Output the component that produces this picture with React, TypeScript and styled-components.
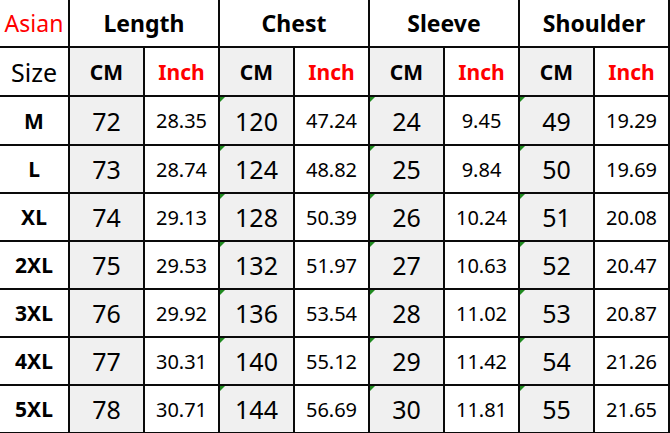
import styled, { createGlobalStyle } from "styled-components";

const GlobalStyle = createGlobalStyle`
  html, body {
    margin: 0;
    padding: 0;
    background: #fff;
  }
  body {
    font-family: "Noto Sans", "Open Sans", sans-serif;
  }
`;

type Row = { size: string; values: [string, string][] };

const rows: Row[] = [
  { size: "M", values: [["72", "28.35"], ["120", "47.24"], ["24", "9.45"], ["49", "19.29"]] },
  { size: "L", values: [["73", "28.74"], ["124", "48.82"], ["25", "9.84"], ["50", "19.69"]] },
  { size: "XL", values: [["74", "29.13"], ["128", "50.39"], ["26", "10.24"], ["51", "20.08"]] },
  { size: "2XL", values: [["75", "29.53"], ["132", "51.97"], ["27", "10.63"], ["52", "20.47"]] },
  { size: "3XL", values: [["76", "29.92"], ["136", "53.54"], ["28", "11.02"], ["53", "20.87"]] },
  { size: "4XL", values: [["77", "30.31"], ["140", "55.12"], ["29", "11.42"], ["54", "21.26"]] },
  { size: "5XL", values: [["78", "30.71"], ["144", "56.69"], ["30", "11.81"], ["55", "21.65"]] },
];

const groups = ["Length", "Chest", "Sleeve", "Shoulder"];

export default function App() {
  return (
    <>
      <GlobalStyle />
      <Sheet>
        <Cell>
          <Red>Asian</Red>
        </Cell>
        {groups.map((g) => (
          <Cell key={g} $span={2}>
            <Title>{g}</Title>
          </Cell>
        ))}

        <Cell>
          <SizeLabel>Size</SizeLabel>
        </Cell>
        {groups.map((g) => (
          <Pair key={g}>
            <Cell $shade>
              <Unit>CM</Unit>
            </Cell>
            <Cell>
              <Unit $red>Inch</Unit>
            </Cell>
          </Pair>
        ))}

        {rows.map((r) => (
          <Pair key={r.size}>
            <Cell>
              <SizeName>{r.size}</SizeName>
            </Cell>
            {r.values.map(([cm, inch], i) => (
              <Pair key={i}>
                <Cell $shade $mark={i > 0}>
                  <Cm>{cm}</Cm>
                </Cell>
                <Cell>
                  <Inch>{inch}</Inch>
                </Cell>
              </Pair>
            ))}
          </Pair>
        ))}
      </Sheet>
    </>
  );
}

const Pair = styled.div`
  display: contents;
`;

const Sheet = styled.div`
  display: grid;
  grid-template-columns: 68px repeat(8, 73px);
  grid-template-rows: 46px 47px 47px repeat(6, 46px);
  gap: 2px;
  width: 668px;
  padding: 0 2px 2px 0;
  background: #0a0a0a;
`;

const Cell = styled.div<{ $span?: number; $shade?: boolean; $mark?: boolean }>`
  position: relative;
  grid-column: span ${(p) => p.$span ?? 1};
  display: flex;
  align-items: center;
  justify-content: center;
  background: ${(p) => (p.$shade ? "#f0f0f0" : "#fff")};
  color: #000;

  &::before {
    content: "";
    display: ${(p) => (p.$mark ? "block" : "none")};
    position: absolute;
    left: 0;
    top: 0;
    border-top: 5px solid #1f8a1f;
    border-right: 5px solid transparent;
  }
`;

const Red = styled.span`
  font-size: 23px;
  color: #f00;
`;

const Title = styled.span`
  font-size: 23px;
  font-weight: 700;
`;

const SizeLabel = styled.span`
  font-size: 25px;
`;

const Unit = styled.span<{ $red?: boolean }>`
  font-size: 21px;
  font-weight: 700;
  color: ${(p) => (p.$red ? "#f00" : "#000")};
`;

const SizeName = styled.span`
  font-size: 21px;
  font-weight: 700;
`;

const Cm = styled.span`
  font-size: 25px;
`;

const Inch = styled.span`
  font-size: 20px;
`;
